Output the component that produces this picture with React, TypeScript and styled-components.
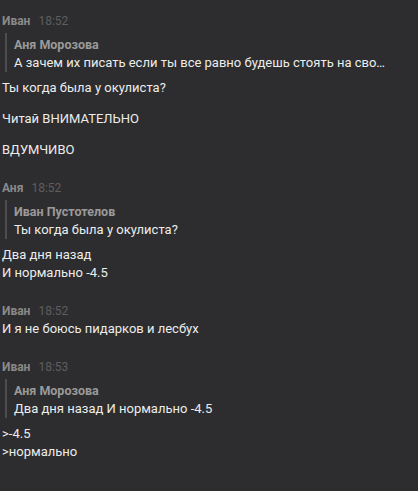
import React from "react";
import styled, { createGlobalStyle } from "styled-components";

const Global = createGlobalStyle`
  html, body {
    margin: 0;
    padding: 0;
    background: #2d2d2f;
  }
  body {
    font-family: Roboto, "Noto Sans", "Liberation Sans", sans-serif;
    -webkit-font-smoothing: antialiased;
  }
`;

const Page = styled.div`
  width: 418px;
  min-height: 491px;
  box-sizing: border-box;
  padding: 12px 0 0 2px;
  background: #2d2d2f;
  display: flex;
  flex-direction: column;
  gap: 20px;
`;

const Group = styled.section`
  display: flex;
  flex-direction: column;
`;

const Header = styled.div`
  display: flex;
  align-items: baseline;
  gap: 8px;
  height: 18px;
  line-height: 18px;
  font-size: 12px;
`;

const Author = styled.span`
  font-weight: 700;
  color: #8a8a8a;
`;

const Time = styled.span`
  color: #5e5e60;
`;

const Quote = styled.div`
  margin: 3px 0 7px 3px;
  padding: 3px 0 0 7px;
  border-left: 2px solid #4d4d4f;
  display: flex;
  flex-direction: column;
`;

const QuoteAuthor = styled.div`
  font-size: 12.5px;
  font-weight: 700;
  line-height: 18px;
  color: #9a9a9a;
`;

const QuoteText = styled.div`
  font-size: 13px;
  line-height: 18px;
  color: #ececec;
  white-space: nowrap;
`;

const Messages = styled.div<{ $spaced?: boolean }>`
  display: flex;
  flex-direction: column;
  gap: ${(p) => (p.$spaced ? "13px" : "0")};
`;

const Text = styled.div`
  font-size: 13px;
  line-height: 18px;
  color: #ececec;
  white-space: pre-line;
`;

type Msg = {
  author: string;
  time: string;
  quote?: { author: string; text: string };
  lines: string[];
  spaced?: boolean;
};

const data: Msg[] = [
  {
    author: "Иван",
    time: "18:52",
    quote: {
      author: "Аня Морозова",
      text: "А зачем их писать если ты все равно будешь стоять на сво…",
    },
    lines: ["Ты когда была у окулиста?", "Читай ВНИМАТЕЛЬНО", "ВДУМЧИВО"],
    spaced: true,
  },
  {
    author: "Аня",
    time: "18:52",
    quote: { author: "Иван Пустотелов", text: "Ты когда была у окулиста?" },
    lines: ["Два дня назад\nИ нормально -4.5"],
  },
  {
    author: "Иван",
    time: "18:52",
    lines: ["И я не боюсь пидарков и лесбух"],
  },
  {
    author: "Иван",
    time: "18:53",
    quote: { author: "Аня Морозова", text: "Два дня назад И нормально -4.5" },
    lines: [">-4.5\n>нормально"],
  },
];

export default function App() {
  return (
    <>
      <Global />
      <Page>
        {data.map((m, i) => (
          <Group key={i}>
            <Header>
              <Author>{m.author}</Author>
              <Time>{m.time}</Time>
            </Header>
            {m.quote && (
              <Quote>
                <QuoteAuthor>{m.quote.author}</QuoteAuthor>
                <QuoteText>{m.quote.text}</QuoteText>
              </Quote>
            )}
            <Messages $spaced={m.spaced}>
              {m.lines.map((l, j) => (
                <Text key={j}>{l}</Text>
              ))}
            </Messages>
          </Group>
        ))}
      </Page>
    </>
  );
}
